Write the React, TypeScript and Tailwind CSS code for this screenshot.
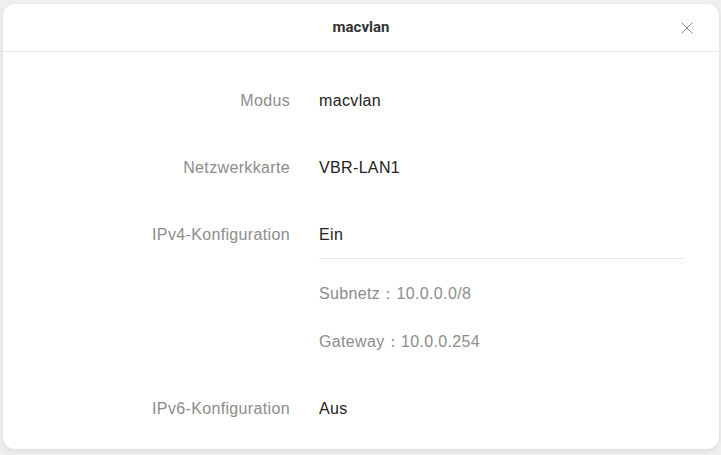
import { X } from "lucide-react";

function Row({ label, children, className = "" }: { label: string; children: React.ReactNode; className?: string }) {
  return (
    <div className={`flex ${className}`}>
      <div className="w-[287px] shrink-0 text-right text-[#8c8c8c] leading-[24px]">{label}</div>
      <div className="ml-[29px] flex-1 text-[#222] leading-[24px]">{children}</div>
    </div>
  );
}

export default function App() {
  return (
    <div className="h-[455px] w-[721px] bg-[#efefef] pt-[4px] pl-[3px] pr-[2px] overflow-hidden font-['Liberation_Sans',Arial,sans-serif]">
      <div className="h-[445px] rounded-[12px] bg-white shadow-[0_2px_6px_rgba(0,0,0,0.08)] overflow-hidden">
        {/* Header */}
        <div className="relative flex h-[48px] items-center justify-center border-b border-[#e8e8e8]">
          <span className="font-['Roboto',sans-serif] text-[15px] font-bold text-[#333]">macvlan</span>
          <button className="absolute right-[22px] top-[14px] text-[#8a8a8a]">
            <X size={20} strokeWidth={1.2} />
          </button>
        </div>

        {/* Body */}
        <div className="pt-[37px] pr-[35px] text-[16px] tracking-[0.35px]">
          <Row label="Modus">macvlan</Row>
          <Row label="Netzwerkkarte" className="mt-[43px]">VBR-LAN1</Row>
          <Row label="IPv4-Konfiguration" className="mt-[43px]">
            Ein
            <div className="mt-[11px] border-t border-[#e8e8e8]" />
            <div className="mt-[23px] text-[#8c8c8c]">Subnetz：10.0.0.0/8</div>
            <div className="mt-[24px] text-[#8c8c8c]">Gateway：10.0.0.254</div>
          </Row>
          <Row label="IPv6-Konfiguration" className="mt-[43px]">Aus</Row>
        </div>
      </div>
    </div>
  );
}
